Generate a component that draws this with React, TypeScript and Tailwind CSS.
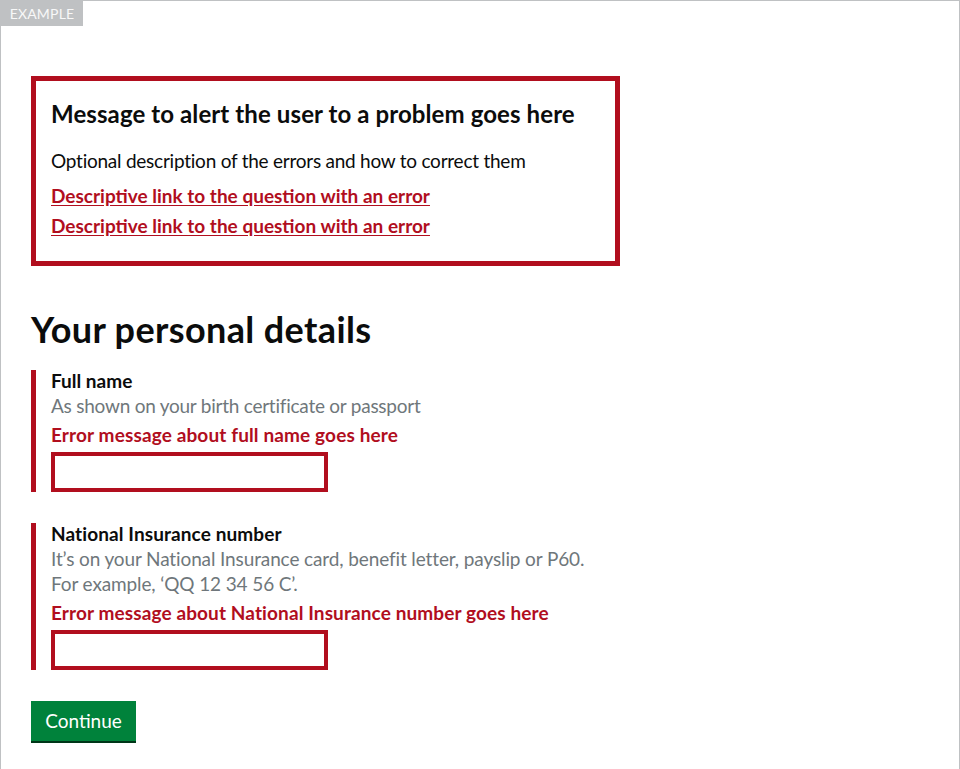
import React from "react";

const font = { fontFamily: "Lato, 'Noto Sans', Arial, sans-serif" };

export default function App() {
  return (
    <div className="min-h-[769px] overflow-hidden bg-white" style={font}>
      <div className="relative min-h-[800px] border border-[#bfc1c3] pl-[30px] pt-[75px] text-[#0b0c0c]">
        <div className="absolute left-0 top-0 flex h-[25px] w-[82px] items-center justify-center bg-[#bfc1c3] text-[14px] uppercase tracking-[0.2px] text-[#f8f8f8]">
          Example
        </div>

        <div className="w-[589px] border-[5px] border-[#b10e1e] px-[15px] pb-[23px] pt-[18px]">
          <h2 className="text-[24px] font-bold leading-[30px] tracking-[0.1px]">
            Message to alert the user to a problem goes here
          </h2>
          <p className="mt-[19px] text-[19px] leading-[25px] tracking-[-0.24px]">
            Optional description of the errors and how to correct them
          </p>
          <ul className="mt-[10px] flex flex-col gap-[5px] text-[19px] font-bold leading-[25px]">
            <li>
              <a href="#full-name" className="text-[#b10e1e] underline underline-offset-2">
                Descriptive link to the question with an error
              </a>
            </li>
            <li>
              <a href="#ni-number" className="text-[#b10e1e] underline underline-offset-2">
                Descriptive link to the question with an error
              </a>
            </li>
          </ul>
        </div>

        <h1 className="mt-[43px] text-[36px] font-bold leading-[40px] tracking-[0.38px]">
          Your personal details
        </h1>

        <div className="mt-[21px] border-l-[5px] border-[#b10e1e] pl-[15px]">
          <label htmlFor="full-name" className="block text-[19px] font-bold leading-[22px]">
            Full name
          </label>
          <div className="mt-[1px] text-[19px] leading-[25px] tracking-[-0.24px] text-[#6f777b]">
            As shown on your birth certificate or passport
          </div>
          <div className="mt-[4px] mb-[5px] text-[19px] font-bold leading-[25px] tracking-[0.13px] text-[#b10e1e]">
            Error message about full name goes here
          </div>
          <input
            id="full-name"
            type="text"
            className="block h-[40px] w-[277px] border-4 border-[#b10e1e] px-1 text-[19px] outline-none"
          />
        </div>

        <div className="mt-[31px] border-l-[5px] border-[#b10e1e] pl-[15px]">
          <label htmlFor="ni-number" className="block text-[19px] font-bold leading-[22px] tracking-[0.1px]">
            National Insurance number
          </label>
          <div className="mt-[1px] text-[19px] leading-[25px] tracking-[-0.12px] text-[#6f777b]">
            It’s on your National Insurance card, benefit letter, payslip or P60.
            <br />
            For example, ‘QQ 12 34 56 C’.
          </div>
          <div className="mt-[4px] mb-[5px] text-[19px] font-bold leading-[25px] tracking-[0.11px] text-[#b10e1e]">
            Error message about National Insurance number goes here
          </div>
          <input
            id="ni-number"
            type="text"
            className="block h-[40px] w-[277px] border-4 border-[#b10e1e] px-1 text-[19px] outline-none"
          />
        </div>

        <button
          type="button"
          className="mt-[31px] flex h-[40px] w-[105px] items-center justify-center bg-[#00823b] pb-[2px] text-[19px] leading-[25px] text-white shadow-[0_2px_0_#003618]"
        >
          Continue
        </button>
      </div>
    </div>
  );
}
